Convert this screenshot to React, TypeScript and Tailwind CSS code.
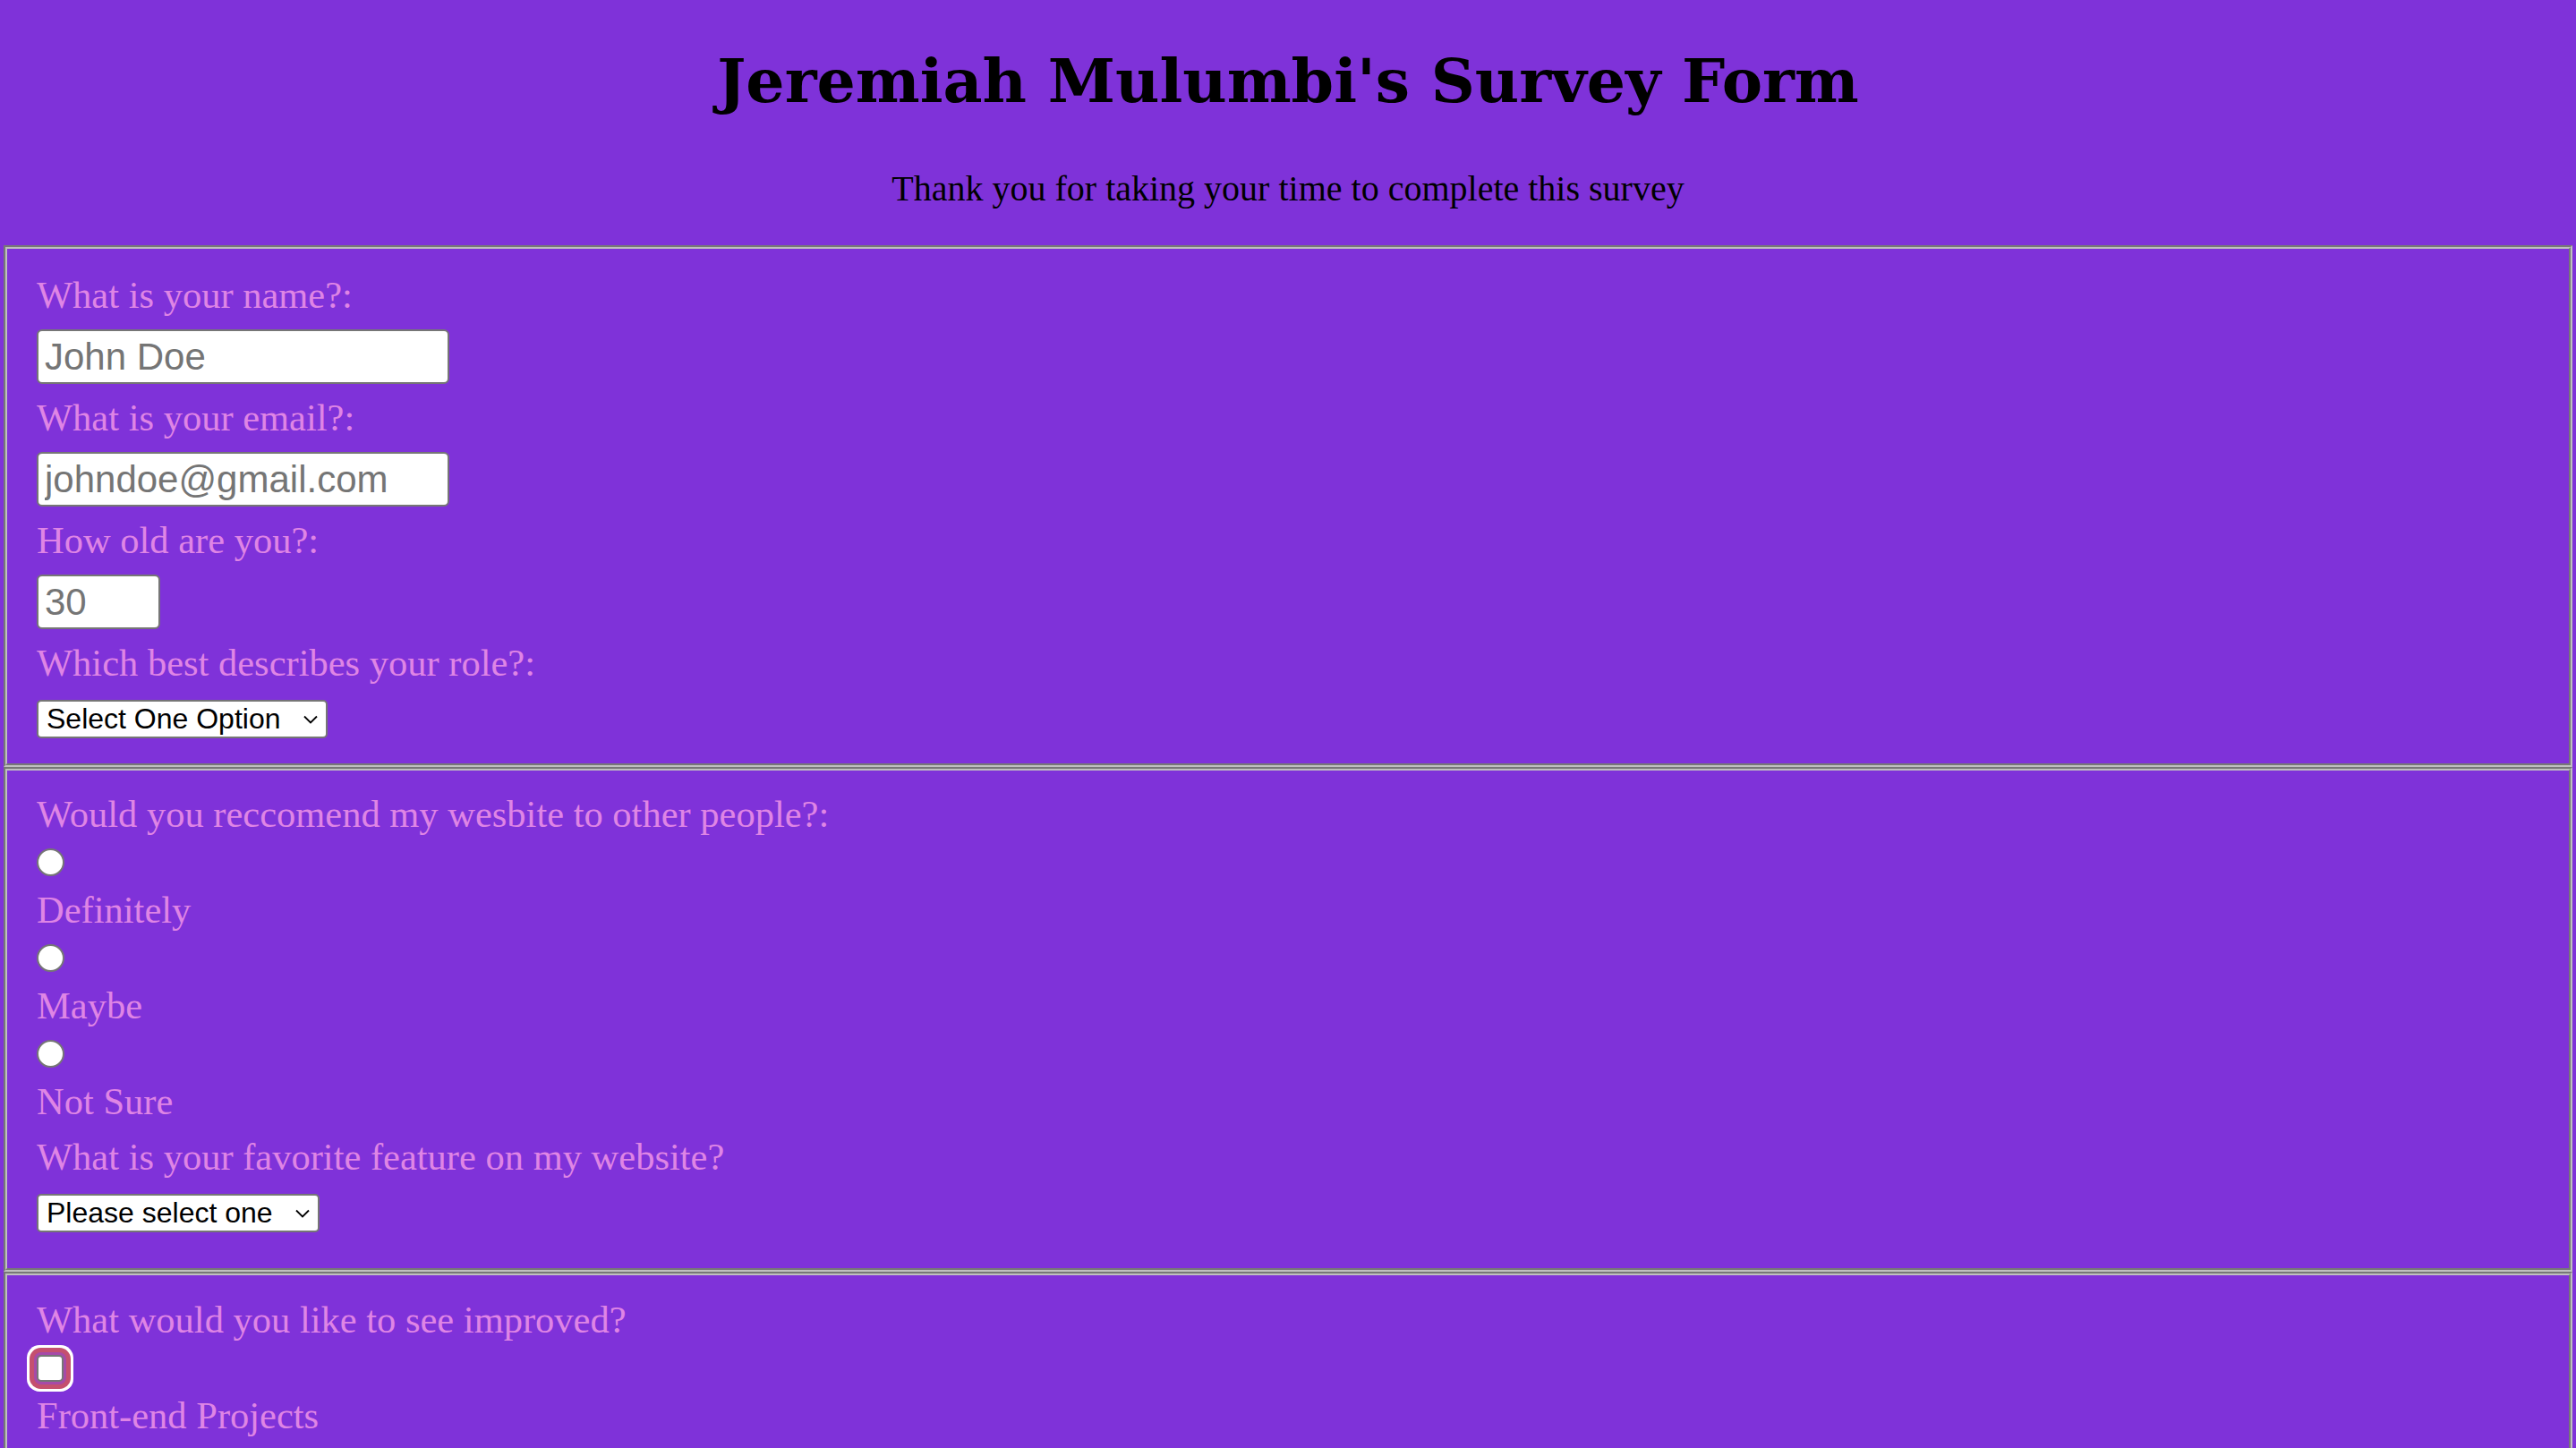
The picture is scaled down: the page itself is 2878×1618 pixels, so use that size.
import React from 'react';

// survey page, drawn at 2x (retina screenshot)
const labelCls = "block text-[42.5px] leading-[48px] text-[#df85e5]";
const inputCls =
  "h-[61px] rounded-[6px] border-2 border-[#767676] bg-white px-[7px] font-['Liberation_Sans',Arial,sans-serif] text-[42px] text-black placeholder:text-[#757575] outline-none";
const radioCls = "appearance-none size-[31px] shrink-0 rounded-full border-2 border-[#767676] bg-white";
const boxCls = "appearance-none size-[30px] shrink-0 rounded-[5px] border-2 border-[#767676] bg-white";

const Chevron: React.FC = () => (
  <svg
    className="pointer-events-none absolute right-[11px] top-1/2 -translate-y-1/2"
    width="16"
    height="10"
    viewBox="0 0 16 10"
    fill="none"
  >
    <polyline points="1,1.5 8,8.5 15,1.5" stroke="#000" strokeWidth="1.8" />
  </svg>
);

const Select: React.FC<{ width: string; options: string[] }> = ({ width, options }) => (
  <div className="relative mt-[3px]">
    <select
      defaultValue={options[0]}
      className={`appearance-none h-[43px] ${width} rounded-[5px] border-2 border-[#767676] bg-white py-0 pl-[9px] font-['Liberation_Sans',Arial,sans-serif] text-[32px] leading-[39px] text-black outline-none`}
    >
      {options.map((o) => (
        <option key={o}>{o}</option>
      ))}
    </select>
    <Chevron />
  </div>
);

// fieldset with a 2+2px groove edge
const Group: React.FC<{ pad: string; children: React.ReactNode }> = ({ pad, children }) => (
  <fieldset className="mx-[4px] min-w-0 border-2 border-t-[#777777] border-l-[#777777] border-r-[#bfbfbf] border-b-[#bfbfbf]">
    <div
      className={`flex flex-col items-start gap-[14px] border-2 border-t-[#bfbfbf] border-l-[#bfbfbf] border-r-[#777777] border-b-[#777777] pl-[33px] ${pad}`}
    >
      {children}
    </div>
  </fieldset>
);

export default function App() {
  return (
    <div className="min-h-screen bg-[#7f32d9] pt-[56px] font-['Liberation_Serif','Times_New_Roman',serif] text-black">
      <h1 className="text-center font-['DejaVu_Serif',Georgia,serif] text-[68px] font-bold leading-none">
        Jeremiah Mulumbi's Survey Form
      </h1>
      <p className="mt-[67px] text-center text-[40px] leading-none">
        Thank you for taking your time to complete this survey
      </p>

      <form className="mt-[43px]">
        <Group pad="pt-[28px] pb-[28px]">
          <label className={labelCls}>What is your name?:</label>
          <input type="text" placeholder="John Doe" className={`${inputCls} w-[461px]`} />
          <label className={labelCls}>What is your email?:</label>
          <input type="email" placeholder="johndoe@gmail.com" className={`${inputCls} w-[461px]`} />
          <label className={labelCls}>How old are you?:</label>
          <input type="number" placeholder="30" className={`${inputCls} w-[138px]`} />
          <label className={labelCls}>Which best describes your role?:</label>
          <Select
            width="w-[325px]"
            options={['Select One Option', 'Student', 'Full Time Job', 'Full Time Learner', 'Other']}
          />
        </Group>

        <Group pad="pt-[25px] pb-[40px]">
          <label className={labelCls}>Would you reccomend my wesbite to other people?:</label>
          <input type="radio" name="recommend" className={radioCls} />
          <label className={labelCls}>Definitely</label>
          <input type="radio" name="recommend" className={radioCls} />
          <label className={labelCls}>Maybe</label>
          <input type="radio" name="recommend" className={radioCls} />
          <label className={labelCls}>Not Sure</label>
          <label className={labelCls}>What is your favorite feature on my website?</label>
          <Select
            width="w-[316px]"
            options={['Please select one', 'Challenges', 'Projects', 'Community', 'Open Source']}
          />
        </Group>

        <Group pad="pt-[26px] pb-[40px]">
          <label className={labelCls}>What would you like to see improved?</label>
          <input
            type="checkbox"
            className={`${boxCls} mt-[1px] shadow-[0_0_0_3px_#a64aa8,0_0_0_8px_#c4506f,0_0_0_11px_#ffffff]`}
          />
          <label className={labelCls}>Front-end Projects</label>
          <input type="checkbox" className={boxCls} />
          <label className={labelCls}>Back-end Projects</label>
          <input type="checkbox" className={boxCls} />
          <label className={labelCls}>Data Visualization</label>
        </Group>
      </form>
    </div>
  );
}
